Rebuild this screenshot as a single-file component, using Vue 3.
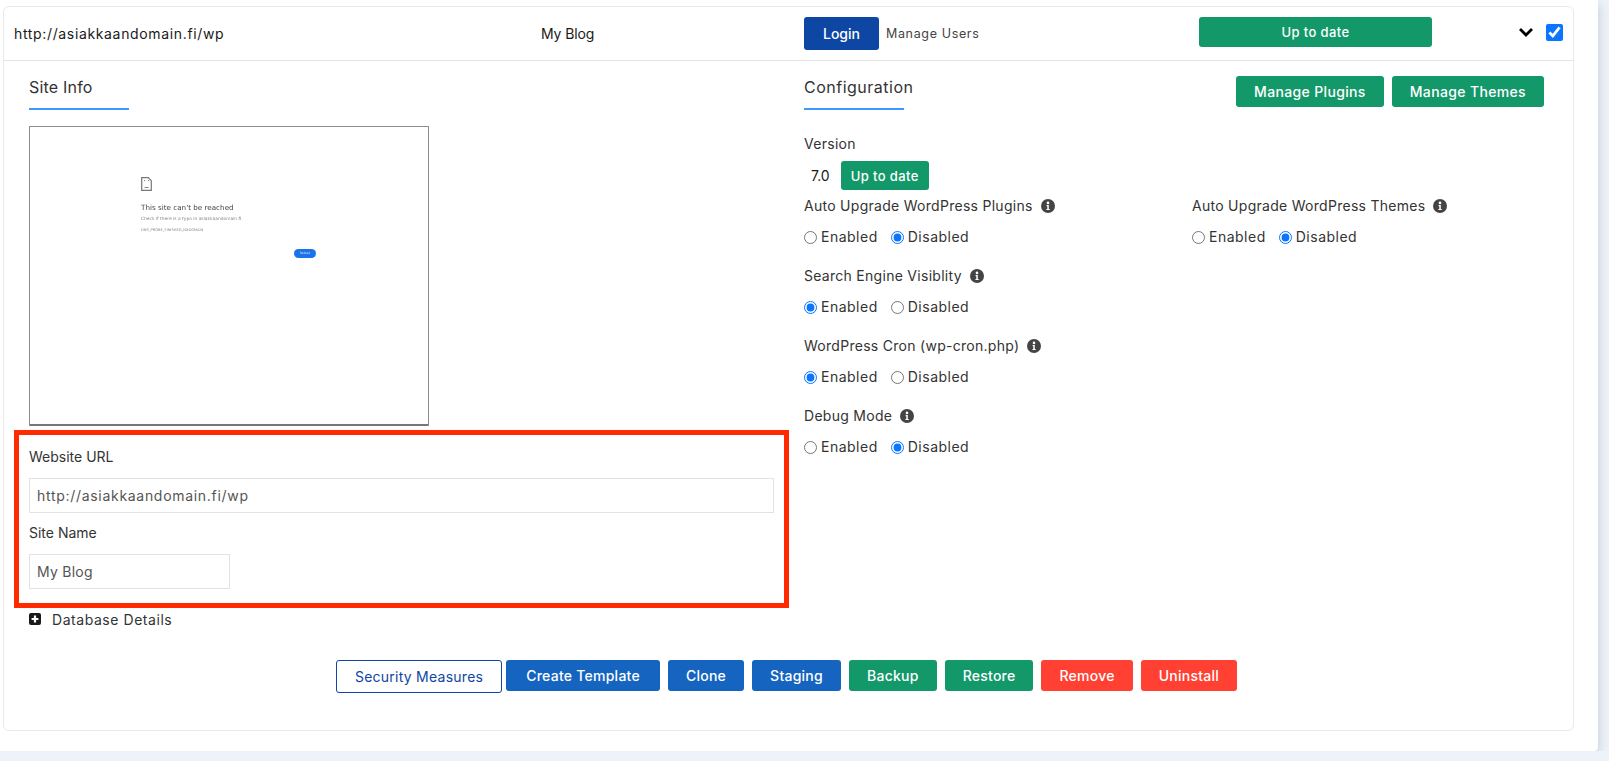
<script setup>
const actions = [
  { label: 'Security Measures', kind: 'outline' },
  { label: 'Create Template', kind: 'blue', wide: true },
  { label: 'Clone', kind: 'blue' },
  { label: 'Staging', kind: 'blue' },
  { label: 'Backup', kind: 'green' },
  { label: 'Restore', kind: 'green' },
  { label: 'Remove', kind: 'red' },
  { label: 'Uninstall', kind: 'red' },
];

const settings = [
  { label: 'Search Engine Visiblity', name: 'search', value: 'Enabled' },
  { label: 'WordPress Cron (wp-cron.php)', name: 'cron', value: 'Enabled' },
  { label: 'Debug Mode', name: 'debug', value: 'Disabled' },
];

const autoUpgrades = [
  { label: 'Auto Upgrade WordPress Plugins', name: 'plugins', value: 'Disabled' },
  { label: 'Auto Upgrade WordPress Themes', name: 'themes', value: 'Disabled' },
];
</script>

<template>
  <div class="panel">
    <div class="card">
      <div class="card-head">
        <div class="head-url">http://asiakkaandomain.fi/wp</div>
        <div class="head-name">My Blog</div>
        <div class="head-login">
          <button class="btn btn-login">Login</button>
          <span class="manage-users">Manage Users</span>
        </div>
        <button class="btn btn-green btn-status">Up to date</button>
        <svg class="chevron" width="16" height="10" viewBox="0 0 16 10">
          <path d="M2 2l6 6 6-6" fill="none" stroke="#000" stroke-width="2.8" />
        </svg>
        <input class="head-check" type="checkbox" checked />
      </div>

      <div class="card-body">
        <div class="col-left">
          <div class="pad">
            <h3 class="section-title">Site Info</h3>
            <div class="thumb">
              <div class="thumb-inner">
                <svg width="11" height="14" viewBox="0 0 11 14">
                  <path d="M.7.7h6.6l3 3v9.6H.7z" fill="none" stroke="#777" stroke-width="1.2" />
                  <path d="M3 3.500h1.200M7 3.500h1.200" stroke="#888" stroke-width="1" />
                  <path d="M3.500 10.500h4" stroke="#888" stroke-width="1" />
                </svg>
                <div class="thumb-title">This site can't be reached</div>
                <div class="thumb-text">Check if there is a typo in asiakkaandomain.fi.</div>
                <div class="thumb-code">DNS_PROBE_FINISHED_NXDOMAIN</div>
                <div class="thumb-reload">Reload</div>
              </div>
            </div>
          </div>

          <div class="highlight">
            <label class="field-label">Website URL</label>
            <input class="field" type="text" value="http://asiakkaandomain.fi/wp" />
            <label class="field-label field-label-2">Site Name</label>
            <input class="field field-short" type="text" value="My Blog" />
          </div>

          <div class="db-row">
            <svg width="12" height="12" viewBox="0 0 12 12">
              <rect width="12" height="12" rx="2" fill="#1a1a1a" />
              <path d="M6 2.600v6.800M2.600 6h6.800" stroke="#fff" stroke-width="2.200" />
            </svg>
            <span>Database Details</span>
          </div>
        </div>

        <div class="col-right">
          <div class="config-head">
            <h3 class="section-title">Configuration</h3>
            <div class="manage-btns">
              <button class="btn btn-green btn-manage">Manage Plugins</button>
              <button class="btn btn-green btn-manage">Manage Themes</button>
            </div>
          </div>

          <div class="opt-label version-label">Version</div>
          <div class="version-row">
            <span class="version-no">7.0</span>
            <button class="btn btn-green btn-version">Up to date</button>
          </div>

          <div class="upgrade-row">
            <div v-for="item in autoUpgrades" :key="item.name" class="option upgrade-col">
              <div class="opt-label">
                {{ item.label }}
                <svg class="info" width="14" height="14" viewBox="0 0 14 14">
                  <circle cx="7" cy="7" r="7" fill="#444" />
                  <circle cx="7" cy="3.900" r="1.300" fill="#fff" />
                  <path d="M5.600 6.100h2.200v3.900h.9v1.100H5.400V10h.9V7.200h-.7z" fill="#fff" />
                </svg>
              </div>
              <div class="radios">
                <label><input type="radio" :name="item.name" :checked="item.value === 'Enabled'" />Enabled</label>
                <label><input type="radio" :name="item.name" :checked="item.value === 'Disabled'" />Disabled</label>
              </div>
            </div>
          </div>

          <div v-for="item in settings" :key="item.name" class="option">
            <div class="opt-label">
              {{ item.label }}
              <svg class="info" width="14" height="14" viewBox="0 0 14 14">
                <circle cx="7" cy="7" r="7" fill="#444" />
                <circle cx="7" cy="3.900" r="1.300" fill="#fff" />
                <path d="M5.600 6.100h2.200v3.900h.9v1.100H5.400V10h.9V7.200h-.7z" fill="#fff" />
              </svg>
            </div>
            <div class="radios">
              <label><input type="radio" :name="item.name" :checked="item.value === 'Enabled'" />Enabled</label>
              <label><input type="radio" :name="item.name" :checked="item.value === 'Disabled'" />Disabled</label>
            </div>
          </div>
        </div>
      </div>

      <div class="actions">
        <button
          v-for="a in actions"
          :key="a.label"
          class="btn btn-action"
          :class="['act-' + a.kind, { 'act-wide': a.wide }]"
        >
          {{ a.label }}
        </button>
      </div>
    </div>
  </div>
</template>

<style>
html,
body {
  margin: 0;
  background: #eef3f9;
}
</style>

<style scoped>
.panel {
  width: 1598px;
  height: 751px;
  box-sizing: border-box;
  padding: 6px 24px 0 3px;
  background: #fff;
  border-radius: 0 0 4px 0;
  box-shadow: 0 4px 12px rgba(80, 100, 130, 0.3);
  font-family: Inter, 'Liberation Sans', sans-serif;
  font-size: 14px;
  color: #333;
}
.card {
  height: 725px;
  box-sizing: border-box;
  border: 1px solid #e9e9e9;
  border-radius: 6px;
}
.card-head {
  display: flex;
  align-items: center;
  height: 53px;
  border-bottom: 1px solid #e4e4e4;
  color: #1a1a1a;
}
.head-url {
  width: 537px;
  padding-left: 10px;
  box-sizing: border-box;
  letter-spacing: 0.65px;
}
.head-name {
  width: 263px;
  letter-spacing: -0.1px;
}
.head-login {
  width: 395px;
  display: flex;
  align-items: center;
  gap: 7px;
}
.manage-users {
  font-size: 12.500px;
  color: #444;
  letter-spacing: 0.65px;
}
.btn {
  border: 0;
  border-radius: 3px;
  font-family: inherit;
  font-weight: 500;
  color: #fff;
  cursor: pointer;
  padding: 0;
}
.btn-login {
  width: 75px;
  height: 33px;
  background: #0e46a3;
  font-size: 14px;
}
.btn-green {
  background: #13986a;
}
.btn-status {
  width: 233px;
  height: 30px;
  margin-top: -4px;
  font-size: 13px;
  letter-spacing: 0.4px;
}
.chevron {
  margin-left: 86px;
  margin-top: -3px;
}
.head-check {
  width: 17px;
  height: 17px;
  margin: -3px 0 0 12px;
  accent-color: #0a75ff;
}
.card-body {
  display: flex;
  padding-left: 10px;
}
.col-left {
  width: 775px;
  flex: none;
}
.pad {
  padding: 0 15px;
}
.section-title {
  margin: 14px 0 0;
  width: 100px;
  padding-bottom: 9px;
  border-bottom: 2px solid #3f97ff;
  font-size: 16px;
  font-weight: 400;
  line-height: 24px;
  color: #333;
  letter-spacing: 0.2px;
  white-space: nowrap;
}
.config-head .section-title {
  letter-spacing: 0.5px;
}
.thumb {
  width: 400px;
  height: 300px;
  box-sizing: border-box;
  margin-top: 16px;
  border: 1px solid #8c8c8c;
  border-bottom: 2px solid #777;
  border-radius: 1px;
  overflow: hidden;
}
.thumb-inner {
  padding: 50px 0 0 111px;
  filter: blur(0.7px);
  font-family: 'DejaVu Sans', sans-serif;
  color: #555;
  line-height: 1;
}
.thumb-inner svg {
  display: block;
}
.thumb-title {
  margin-top: 13px;
  font-size: 7.200px;
  color: #444;
  white-space: nowrap;
}
.thumb-text {
  margin-top: 6px;
  font-size: 4.400px;
  color: #888;
}
.thumb-code {
  margin-top: 7px;
  font-size: 3.600px;
  color: #888;
}
.thumb-reload {
  width: 22px;
  height: 9px;
  margin: 17px 0 0 153px;
  border-radius: 5px;
  background: #1a73e8;
  color: #cfe2fb;
  font-size: 3px;
  line-height: 9px;
  text-align: center;
}
.highlight {
  box-sizing: border-box;
  height: 178px;
  margin-top: 4px;
  padding: 11px 10px 0;
  border: 5px solid #ff2a00;
}
.field-label {
  display: block;
  line-height: 22px;
  color: #333;
}
.field-label-2 {
  margin-top: 9px;
}
.field {
  display: block;
  width: 100%;
  height: 35px;
  box-sizing: border-box;
  margin-top: 10px;
  padding: 0 7px;
  border: 1px solid #e2e3e6;
  border-radius: 0;
  outline: none;
  font-family: inherit;
  font-size: 14px;
  color: #555;
  letter-spacing: 0.7px;
}
.field-short {
  width: 201px;
  letter-spacing: 0.25px;
}
.db-row {
  display: flex;
  align-items: center;
  gap: 11px;
  height: 22px;
  padding-left: 15px;
  color: #333;
  letter-spacing: 0.55px;
}
.col-right {
  flex: 1;
  min-width: 0;
  padding: 0 29px 0 15px;
}
.config-head {
  display: flex;
  justify-content: space-between;
  align-items: flex-start;
}
.manage-btns {
  display: flex;
  gap: 8px;
  margin-top: 15px;
}
.btn-manage {
  height: 31px;
  font-size: 14px;
  padding: 0 18px;
  letter-spacing: 0.35px;
}
.opt-label {
  display: flex;
  align-items: center;
  line-height: 22px;
  color: #333;
  letter-spacing: 0.28px;
}
.version-label {
  margin-top: 23px;
}
.version-row {
  display: flex;
  align-items: center;
  gap: 11px;
  margin-top: 6px;
  padding-left: 7px;
}
.version-no {
  color: #1a1a1a;
}
.btn-version {
  width: 88px;
  height: 29px;
  font-size: 13px;
  letter-spacing: 0.4px;
}
.upgrade-row {
  display: flex;
  margin-top: 5px;
}
.upgrade-col {
  flex: none;
  width: 388px;
}
.option {
  margin-bottom: 17px;
}
.info {
  margin-left: 8px;
}
.radios {
  display: flex;
  gap: 13px;
  margin-top: 9px;
  line-height: 22px;
  color: #333;
}
.radios label {
  display: flex;
  align-items: center;
  gap: 4px;
  letter-spacing: 0.5px;
}
.radios input {
  width: 13px;
  height: 13px;
  margin: 0;
  accent-color: #0a75ff;
}
.actions {
  display: flex;
  justify-content: center;
  align-items: flex-start;
  gap: 8px;
  margin-top: 30px;
  padding-right: 4px;
}
.btn-action {
  height: 31px;
  padding: 0 18px;
  font-size: 14px;
  letter-spacing: 0.25px;
}
.act-wide {
  padding: 0 20px;
}
.act-outline {
  height: 33px;
  margin-right: -4px;
  background: #fff;
  border: 1px solid #0e46a3;
  color: #0e46a3;
  font-weight: 400;
}
.act-blue {
  background: #1565c0;
}
.act-green {
  background: #13986a;
}
.act-red {
  background: #ff4033;
}
</style>
